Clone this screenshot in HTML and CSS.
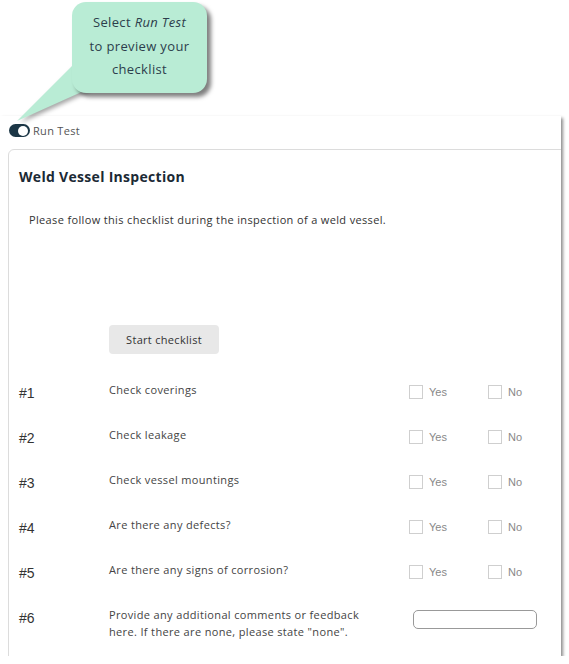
FILE: index.html
```html
<!DOCTYPE html>
<html lang="en">
<head>
    <meta charset="UTF-8">
    <title>Weld Vessel Inspection</title>
    <link rel="stylesheet" href="styles.css">
</head>
<body>

    <div class="callout">
        <svg class="callout-tail" width="100" height="130" viewBox="0 0 100 130">
            <polygon points="78,60 86,90 17,121" fill="#b9ecd5"></polygon>
        </svg>
        <div class="callout-box">
            Select <em>Run Test</em><br>to preview your<br>checklist
        </div>
    </div>

    <div class="frame">
        <div class="run-test">
            <span class="toggle"><span class="knob"></span></span>
            <span class="run-label">Run Test</span>
        </div>

        <div class="card">
            <h2 class="title">Weld Vessel Inspection</h2>
            <p class="intro">Please follow this checklist during the inspection of a weld vessel.</p>

            <div class="start-row">
                <button type="button" class="start-btn">Start checklist</button>
            </div>

            <div class="checklist">
                <div class="item">
                    <span class="num">#1</span>
                    <span class="question">Check coverings</span>
                    <label class="opt"><span class="box"></span>Yes</label>
                    <label class="opt"><span class="box"></span>No</label>
                </div>
                <div class="item">
                    <span class="num">#2</span>
                    <span class="question">Check leakage</span>
                    <label class="opt"><span class="box"></span>Yes</label>
                    <label class="opt"><span class="box"></span>No</label>
                </div>
                <div class="item">
                    <span class="num">#3</span>
                    <span class="question">Check vessel mountings</span>
                    <label class="opt"><span class="box"></span>Yes</label>
                    <label class="opt"><span class="box"></span>No</label>
                </div>
                <div class="item">
                    <span class="num">#4</span>
                    <span class="question">Are there any defects?</span>
                    <label class="opt"><span class="box"></span>Yes</label>
                    <label class="opt"><span class="box"></span>No</label>
                </div>
                <div class="item">
                    <span class="num">#5</span>
                    <span class="question">Are there any signs of corrosion?</span>
                    <label class="opt"><span class="box"></span>Yes</label>
                    <label class="opt"><span class="box"></span>No</label>
                </div>
                <div class="item item-text">
                    <span class="num">#6</span>
                    <span class="question">Provide any additional comments or feedback here. If there are none, please state "none".</span>
                    <input type="text" class="comment">
                </div>
            </div>
        </div>
    </div>

</body>
</html>
```

FILE: styles.css
```css
body {
    font-family: "Open Sans", "Noto Sans", Arial, sans-serif;
    margin: 0;
    padding: 116px 0 0 0;
    background-color: #ffffff;
    color: #333;
}
.callout {
    position: absolute;
    top: 0;
    left: 0;
    width: 220px;
    height: 125px;
}
.callout-tail {
    position: absolute;
    top: 0;
    left: 0;
    filter: drop-shadow(3px 2px 2px rgba(0, 0, 0, 0.35));
}
.callout-box {
    position: absolute;
    top: 2px;
    left: 72px;
    width: 135px;
    height: 91px;
    box-sizing: border-box;
    padding-top: 9px;
    background-color: #b9ecd5;
    border-radius: 14px;
    box-shadow: 4px 4px 4px rgba(0, 0, 0, 0.5);
    text-align: center;
    font-size: 13px;
    line-height: 23.5px;
    letter-spacing: 0.35px;
    color: #2c3e4c;
}
.frame {
    width: 561px;
    height: 540px;
    overflow: hidden;
    box-shadow: 2px 2px 3px rgba(0, 0, 0, 0.45);
}
.run-test {
    display: flex;
    align-items: center;
    gap: 3px;
    padding: 8px 0 0 9px;
    height: 13px;
}
.toggle {
    display: flex;
    align-items: center;
    justify-content: flex-end;
    width: 21px;
    height: 13px;
    padding-right: 2px;
    box-sizing: border-box;
    border-radius: 7px;
    background-color: #1c3746;
}
.knob {
    width: 10px;
    height: 10px;
    border-radius: 50%;
    background-color: #ffffff;
}
.run-label {
    font-size: 11px;
    letter-spacing: 0.3px;
    color: #555;
}
.card {
    margin: 12px 0 0 8px;
    width: 600px;
    height: 560px;
    border: 1px solid #dcdcdc;
    border-radius: 6px 0 0 0;
    padding: 17px 0 0 10px;
    box-sizing: border-box;
}
.title {
    margin: 0;
    font-size: 14px;
    line-height: 20px;
    font-weight: 700;
    letter-spacing: 0.3px;
    color: #1b2a35;
}
.intro {
    margin: 25px 0 0 10px;
    font-size: 11px;
    line-height: 16px;
    letter-spacing: 0.35px;
    color: #333;
}
.start-row {
    padding: 97px 0 0 90px;
}
.start-btn {
    font-family: inherit;
    width: 110px;
    height: 29px;
    font-size: 11px;
    letter-spacing: 0.3px;
    color: #333;
    background-color: #e8e8e8;
    border: none;
    border-radius: 4px;
    cursor: pointer;
}
.checklist {
    margin-top: 14px;
}
.item {
    display: grid;
    grid-template-columns: 90px 300px 79px 60px;
    align-items: center;
    height: 45px;
}
.num {
    font-family: "Liberation Sans", Arial, sans-serif;
    font-size: 14px;
    color: #333;
    padding-top: 4px;
}
.question {
    font-size: 11px;
    line-height: 17px;
    letter-spacing: 0.35px;
    color: #444;
    padding-bottom: 2px;
}
.opt {
    display: flex;
    align-items: center;
    gap: 6px;
    padding-top: 3px;
    font-family: "Liberation Sans", Arial, sans-serif;
    font-size: 11px;
    color: #888;
}
.box {
    width: 14px;
    height: 14px;
    box-sizing: border-box;
    border: 1px solid #cfcfcf;
    background-color: #ffffff;
}
.item-text {
    grid-template-columns: 90px 304px 124px;
    align-items: start;
    height: 60px;
}
.item-text .num {
    padding-top: 17px;
}
.item-text .question {
    padding: 13px 40px 0 0;
}
.comment {
    width: 124px;
    height: 19px;
    box-sizing: border-box;
    border: 1px solid #999;
    border-radius: 5px;
    margin-top: 17px;
}
```
